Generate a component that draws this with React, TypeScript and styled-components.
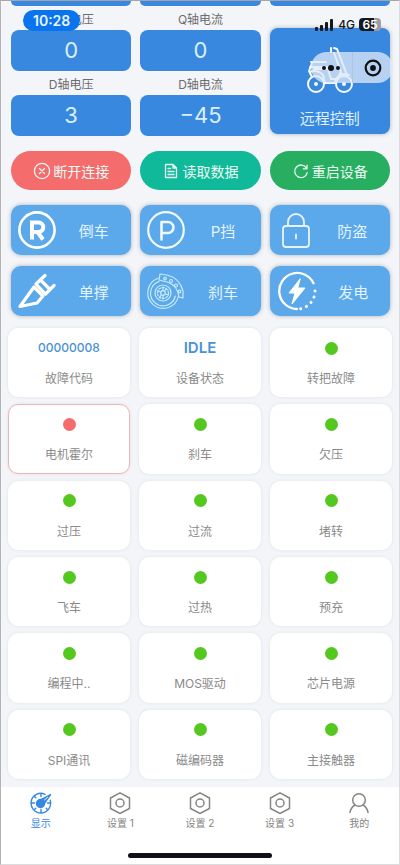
import React from "react";
import styled, { createGlobalStyle } from "styled-components";

const GlobalStyle = createGlobalStyle`
  *, *::before, *::after { box-sizing: border-box; }
  body { margin: 0; }
  button { font: inherit; border: 0; padding: 0; margin: 0; background: none; cursor: pointer; }
`;

const sans = `Inter, "Noto Sans CJK SC", sans-serif`;

const Page = styled.div`
  position: relative;
  display: flex;
  flex-direction: column;
  min-height: 100vh;
  overflow: hidden;
  background: #f3f5f8;
  border: 1px solid #dcdcde;
  border-top-color: #a6a6a8;
  border-left-color: #b4b4b6;
  font-family: ${sans};
  color: #8a8a8a;
`;

const StatusLayer = styled.header`
  position: absolute;
  inset: 0 0 auto 0;
  display: flex;
  justify-content: space-between;
  padding: 9px 18px 0 22px;
`;

const Clock = styled.time`
  height: 21px;
  padding: 0 10px;
  border-radius: 11px;
  background: #0a74ee;
  color: #e9f4ff;
  font-size: 14px;
  font-weight: 600;
  line-height: 21px;
`;

const Signals = styled.div`
  display: flex;
  align-items: center;
  gap: 4px;
  height: 29px;
  color: #15181d;
  font-size: 12px;
  font-weight: 500;
`;

const Battery = styled.span`
  width: 22px;
  height: 13px;
  border-radius: 4px;
  background: linear-gradient(90deg, #15181d 68%, #9b9ea4 68%);
  color: #ffffff;
  font-size: 12px;
  font-weight: 600;
  line-height: 13px;
  text-align: center;
`;

const Capsule = styled.div`
  position: absolute;
  top: 51px;
  right: 6px;
  display: flex;
  width: 82px;
  height: 31px;
  border-radius: 16px;
  background: rgba(222, 232, 247, 0.76);
`;

const CapsuleButton = styled.button`
  display: grid;
  flex: 1;
  place-items: center;
  & + & { border-left: 1px solid #adc4e3; }
`;

const Stats = styled.section`
  display: grid;
  grid-template-columns: repeat(3, 1fr);
  gap: 9px;
  padding: 0 9px 0 10px;
`;

const StatColumn = styled.div`
  display: flex;
  flex-direction: column;
`;

const PanelEdge = styled.div`
  height: 5px;
  border-radius: 0 0 8px 8px;
  background: #3788de;
`;

const StatLabel = styled.div`
  height: 24px;
  padding-top: 2px;
  color: #6c6c6e;
  font-size: 12px;
  line-height: 24px;
  text-align: center;
`;

const StatValue = styled.div`
  height: 41px;
  border-radius: 8px;
  background: #3788de;
  color: #dbefff;
  font-size: 22px;
  line-height: 41px;
  text-align: center;
`;

const RemoteButton = styled.button`
  display: flex;
  flex-direction: column;
  align-items: center;
  gap: 13px;
  height: 106px;
  margin-top: 22px;
  padding-top: 18px;
  border-radius: 8px;
  background: #3788de;
  box-shadow: 0 0 4px rgba(60, 80, 110, 0.4);
  color: #dff0ff;
  font-size: 15px;
  line-height: 24px;
`;

const Commands = styled.section`
  display: grid;
  grid-template-columns: repeat(3, 1fr);
  gap: 9px;
  padding: 15px 9px 0 10px;
`;

const CommandButton = styled.button<{ $color: string }>`
  display: flex;
  align-items: center;
  justify-content: center;
  gap: 2px;
  height: 39px;
  border-radius: 20px;
  background: ${(p) => p.$color};
  color: #e9fbf4;
  font-size: 14px;
`;

const Actions = styled.section`
  display: grid;
  grid-template-columns: repeat(3, 1fr);
  gap: 11px 9px;
  padding: 15px 9px 12px 10px;
`;

const ActionButton = styled.button`
  display: flex;
  align-items: center;
  height: 50px;
  padding-left: 7px;
  border-radius: 10px;
  background: #5ba8ea;
  box-shadow: 0 0 4px rgba(60, 80, 110, 0.4);
  color: #e2f4ff;
  font-size: 15px;
`;

const ActionText = styled.span`
  flex: 1;
  text-align: center;
`;

const StatusGrid = styled.section`
  display: grid;
  flex: 1;
  grid-template-columns: repeat(3, 1fr);
  grid-auto-rows: 1fr;
  gap: 7px 9px;
  padding: 0 7px 8px;
`;

const StatusCard = styled.div<{ $fault?: boolean }>`
  display: flex;
  flex-direction: column;
  align-items: center;
  gap: 10px;
  min-height: 64px;
  padding-top: 8px;
  border: 1px solid ${(p) => (p.$fault ? "#f3b4b6" : "#ffffff")};
  border-radius: 10px;
  background: #ffffff;
  box-shadow: 0 0 3px rgba(100, 110, 125, 0.14);
  font-size: 12px;
  line-height: 20px;
`;

const StatusTop = styled.div<{ $large?: boolean }>`
  display: grid;
  place-items: center;
  height: 22px;
  color: #4a92d5;
  font-size: ${(p) => (p.$large ? 15 : 12)}px;
  font-weight: ${(p) => (p.$large ? 600 : 500)};
`;

const Dot = styled.span<{ $fault?: boolean }>`
  width: 13px;
  height: 13px;
  border-radius: 50%;
  background: ${(p) => (p.$fault ? "#f56c6c" : "#55c81f")};
`;

const TabBar = styled.footer`
  height: 77px;
  background: #ffffff;
`;

const Tabs = styled.nav`
  display: grid;
  grid-template-columns: repeat(5, 1fr);
  height: 66px;
`;

const Tab = styled.button<{ $active?: boolean }>`
  display: flex;
  flex-direction: column;
  align-items: center;
  gap: 2px;
  padding-top: 5px;
  color: ${(p) => (p.$active ? "#3788de" : "#858585")};
  font-size: 10px;
  line-height: 15px;
`;

const HomeIndicator = styled.div`
  width: 36%;
  height: 5px;
  margin: 0 auto;
  border-radius: 3px;
  background: #101114;
`;

const line = { fill: "none", stroke: "currentColor", strokeLinecap: "round", strokeLinejoin: "round" } as const;

const SignalIcon = () => (
  <svg width="19" height="12" viewBox="0 0 19 12" fill="currentColor">
    <rect x="0" y="8" width="3" height="4" rx="1" />
    <rect x="5" y="6" width="3" height="6" rx="1" />
    <rect x="10" y="3" width="3" height="9" rx="1" />
    <rect x="15" y="0" width="3" height="12" rx="1" />
  </svg>
);

const MoreIcon = () => (
  <svg width="20" height="8" viewBox="0 0 20 8" fill="#111">
    <circle cx="3" cy="4" r="2" />
    <circle cx="10" cy="4" r="3" />
    <circle cx="17" cy="4" r="2" />
  </svg>
);

const TargetIcon = () => (
  <svg width="18" height="18" viewBox="0 0 18 18">
    <circle cx="9" cy="9" r="7.3" fill="none" stroke="#111" strokeWidth="2.2" />
    <circle cx="9" cy="9" r="2.9" fill="#111" />
  </svg>
);

const ScooterIcon = () => (
  <svg width="48" height="48" viewBox="0 0 48 48" {...line} stroke="#f7fbff" strokeWidth="2">
    <path d="M25 2v4M28 2l3 1 10 26M28 7l7 19" />
    <path d="M5 16h15M4 21h19M6 17l-3 8 3 6M8 23h14l3 10h6l4-7M19 37h10M4 26c4-2 10-1 13 3l2 8M29 37c1-7 7-11 14-8" />
    <circle cx="10" cy="38" r="8" />
    <circle cx="38" cy="38" r="8" />
    <circle cx="10" cy="38" r="1" />
    <circle cx="38" cy="38" r="1" />
  </svg>
);

const DisconnectIcon = () => (
  <svg width="18" height="18" viewBox="0 0 18 18" {...line} strokeWidth="1.3">
    <circle cx="9" cy="9" r="7.6" />
    <path d="M6.5 6.5l5 5M11.5 6.5l-5 5" />
  </svg>
);

const DocumentIcon = () => (
  <svg width="18" height="18" viewBox="0 0 18 18" {...line} strokeWidth="1.3">
    <path d="M3.500 2.500h7.500l3.500 3.500v9.500h-11zM11 2.500V6h3.500M6 6.500h2.500M6 9.500h6M6 12.500h6" />
  </svg>
);

const RestartIcon = () => (
  <svg width="18" height="18" viewBox="0 0 18 18" {...line} strokeWidth="1.3">
    <path d="M14.4 6a6.3 6.3 0 1 0 .8 4.6M15 3.2v3.6h-3.7" />
  </svg>
);

const ReverseIcon = () => (
  <svg width="38" height="38" viewBox="0 0 38 38" {...line} stroke="#fff">
    <circle cx="19" cy="19" r="17.6" strokeWidth="2.6" />
    <path d="M14 28.500V11.500h6.500a4.800 4.800 0 0 1 0 9.600H14M19.500 21l5.500 7.500" strokeWidth="4" strokeLinecap="butt" strokeLinejoin="miter" />
  </svg>
);

const ParkIcon = () => (
  <svg width="38" height="38" viewBox="0 0 38 38" {...line} stroke="#f1f9ff">
    <circle cx="19" cy="19" r="17.800" strokeWidth="2.200" />
    <path d="M14.500 28.500V11h6.500a5.500 5.500 0 0 1 0 11h-6.500" strokeWidth="2.600" />
  </svg>
);

const LockIcon = () => (
  <svg width="38" height="38" viewBox="0 0 38 38" {...line} stroke="#e5f4ff" strokeWidth="1.800">
    <rect x="6" y="15" width="26" height="21" rx="3" />
    <path d="M11 15V11a8 8 0 0 1 16 0v4M19 23.500v4" />
  </svg>
);

const KickstandIcon = () => (
  <svg width="38" height="38" viewBox="0 0 38 38" {...line} stroke="#fff" strokeWidth="3.200">
    <path d="M2 34.500L16 15l9 9-6 7z" />
    <path d="M18 12l9-8.500M27.500 22l8.500-8.500M18 12l9.500 10M22.500 8l9.500 9.500" />
  </svg>
);

const BrakeIcon = () => (
  <svg width="38" height="38" viewBox="0 0 38 38" {...line} stroke="#c9eafa" strokeWidth="1.200">
    <path d="M11 6.300A15.500 15.500 0 1 0 31.500 24M12 9.500A12.500 12.500 0 1 0 28.300 24" />
    <circle cx="16" cy="21" r="8" />
    <circle cx="16" cy="21" r="5.500" strokeDasharray="2 1.500" />
    <circle cx="16" cy="21" r="2.300" />
    <path d="M16 15v3.500M16 23.500V27M10.500 19l3.200 1M18.500 22l3 1M12.500 25.500l2-2.500M17.500 19l2-2.500" />
    <path d="M13 2l7 1c8 2 14 8 16 16v7l-4-1c-1-7-5-13-12-15l-8-2z" />
    <circle cx="18" cy="6.500" r="1.300" />
    <circle cx="24" cy="9" r="1.500" />
    <circle cx="29" cy="13.500" r="1.500" />
    <circle cx="32.500" cy="19.500" r="1.300" />
  </svg>
);

const GenerateIcon = () => (
  <svg width="40" height="40" viewBox="0 0 40 40" {...line} stroke="#fff">
    <path d="M36.500 12.300A18 18 0 1 0 20 38" strokeWidth="2.300" />
    <path d="M38 20A18 18 0 0 1 22 38" strokeWidth="3" strokeDasharray="0.100 6" />
    <path d="M23 8L12 22h6l-3 11 13-16h-7z" fill="#fff" strokeWidth="1" />
  </svg>
);

const GaugeIcon = () => (
  <svg width="22" height="22" viewBox="0 0 22 22" {...line} strokeWidth="1.400">
    <path d="M15 2.300a9.800 9.800 0 1 0 5.200 6M11 1.500v3M1.500 11h3M20.500 11h-3M11 20.500v-3M4.300 4.300l1.500 1.500M4.300 17.700l1.500-1.500M17.700 17.700l-1.500-1.500" />
    <circle cx="10.500" cy="11.500" r="4" fill="currentColor" />
    <path d="M10 8l10.500-5.500-6.500 9.500z" fill="currentColor" />
    <path d="M14.500 8l3-2.700" stroke="#fff" strokeWidth="1" />
  </svg>
);

const SettingsIcon = () => (
  <svg width="22" height="22" viewBox="0 0 22 22" {...line} strokeWidth="1.500">
    <path d="M11 0.800l9.500 5.200v10.500L11 21.500l-9.500-5V6z" />
    <circle cx="11" cy="11" r="4" />
  </svg>
);

const PersonIcon = () => (
  <svg width="22" height="22" viewBox="0 0 22 22" {...line} strokeWidth="1.500">
    <circle cx="11" cy="8" r="6.300" />
    <path d="M2 20.500C2.500 17 4.500 14.500 7 13M20 20.500C19.500 17 17.500 14.500 15 13" />
  </svg>
);

const gauges = [
  [
    { label: "Q轴电压", value: "0" },
    { label: "D轴电压", value: "3" },
  ],
  [
    { label: "Q轴电流", value: "0" },
    { label: "D轴电流", value: "−45" },
  ],
];

const commands = [
  { label: "断开连接", color: "#f56c6c", Icon: DisconnectIcon },
  { label: "读取数据", color: "#10b99a", Icon: DocumentIcon },
  { label: "重启设备", color: "#27ae60", Icon: RestartIcon },
];

const actions = [
  { label: "倒车", Icon: ReverseIcon },
  { label: "P挡", Icon: ParkIcon },
  { label: "防盗", Icon: LockIcon },
  { label: "单撑", Icon: KickstandIcon },
  { label: "刹车", Icon: BrakeIcon },
  { label: "发电", Icon: GenerateIcon },
];

type Status = { label: string; value?: string; large?: boolean; fault?: boolean };

const statuses: Status[] = [
  { label: "故障代码", value: "00000008" },
  { label: "设备状态", value: "IDLE", large: true },
  { label: "转把故障" },
  { label: "电机霍尔", fault: true },
  { label: "刹车" },
  { label: "欠压" },
  { label: "过压" },
  { label: "过流" },
  { label: "堵转" },
  { label: "飞车" },
  { label: "过热" },
  { label: "预充" },
  { label: "编程中.." },
  { label: "MOS驱动" },
  { label: "芯片电源" },
  { label: "SPI通讯" },
  { label: "磁编码器" },
  { label: "主接触器" },
];

const tabs = [
  { label: "显示", Icon: GaugeIcon },
  { label: "设置 1", Icon: SettingsIcon },
  { label: "设置 2", Icon: SettingsIcon },
  { label: "设置 3", Icon: SettingsIcon },
  { label: "我的", Icon: PersonIcon },
];

export default function App() {
  return (
    <Page>
      <GlobalStyle />
      <Stats>
        {gauges.map((column, i) => (
          <StatColumn key={i}>
            <PanelEdge />
            {column.map(({ label, value }) => (
              <React.Fragment key={label}>
                <StatLabel>{label}</StatLabel>
                <StatValue>{value}</StatValue>
              </React.Fragment>
            ))}
          </StatColumn>
        ))}
        <StatColumn>
          <PanelEdge />
          <RemoteButton>
            <ScooterIcon />
            远程控制
          </RemoteButton>
        </StatColumn>
      </Stats>
      <Commands>
        {commands.map(({ label, color, Icon }) => (
          <CommandButton key={label} $color={color}>
            <Icon />
            {label}
          </CommandButton>
        ))}
      </Commands>
      <Actions>
        {actions.map(({ label, Icon }) => (
          <ActionButton key={label}>
            <Icon />
            <ActionText>{label}</ActionText>
          </ActionButton>
        ))}
      </Actions>
      <StatusGrid>
        {statuses.map(({ label, value, large, fault }) => (
          <StatusCard key={label} $fault={fault}>
            <StatusTop $large={large}>{value ?? <Dot $fault={fault} />}</StatusTop>
            {label}
          </StatusCard>
        ))}
      </StatusGrid>
      <TabBar>
        <Tabs>
          {tabs.map(({ label, Icon }, i) => (
            <Tab key={label} $active={i === 0}>
              <Icon />
              {label}
            </Tab>
          ))}
        </Tabs>
        <HomeIndicator />
      </TabBar>
      <StatusLayer>
        <Clock>10:28</Clock>
        <Signals>
          <SignalIcon />
          4G
          <Battery>65</Battery>
        </Signals>
      </StatusLayer>
      <Capsule>
        <CapsuleButton aria-label="更多">
          <MoreIcon />
        </CapsuleButton>
        <CapsuleButton aria-label="关闭">
          <TargetIcon />
        </CapsuleButton>
      </Capsule>
    </Page>
  );
}
